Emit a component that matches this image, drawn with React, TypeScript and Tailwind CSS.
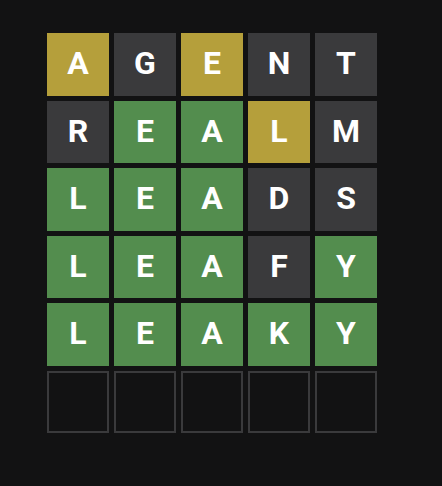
import React from "react";

type S = "y" | "g" | "x" | "e";
const rows: { l: string; s: S }[][] = [
  [
    { l: "A", s: "y" },
    { l: "G", s: "x" },
    { l: "E", s: "y" },
    { l: "N", s: "x" },
    { l: "T", s: "x" },
  ],
  [
    { l: "R", s: "x" },
    { l: "E", s: "g" },
    { l: "A", s: "g" },
    { l: "L", s: "y" },
    { l: "M", s: "x" },
  ],
  [
    { l: "L", s: "g" },
    { l: "E", s: "g" },
    { l: "A", s: "g" },
    { l: "D", s: "x" },
    { l: "S", s: "x" },
  ],
  [
    { l: "L", s: "g" },
    { l: "E", s: "g" },
    { l: "A", s: "g" },
    { l: "F", s: "x" },
    { l: "Y", s: "g" },
  ],
  [
    { l: "L", s: "g" },
    { l: "E", s: "g" },
    { l: "A", s: "g" },
    { l: "K", s: "g" },
    { l: "Y", s: "g" },
  ],
  [
    { l: "", s: "e" },
    { l: "", s: "e" },
    { l: "", s: "e" },
    { l: "", s: "e" },
    { l: "", s: "e" },
  ],
];

const cls: Record<S, string> = {
  y: "bg-[#b59f3b]",
  g: "bg-[#538d4e]",
  x: "bg-[#3a3a3c]",
  e: "border-2 border-[#3a3a3c]",
};

export default function App() {
  return (
    <div className="w-[442px] h-[486px] bg-[#121213] pl-[47px] pt-[33px]">
      <div className="grid grid-cols-5 grid-rows-6 gap-[5px] w-[330px] h-[400px]">
        {rows.flat().map((t, i) => (
          <div
            key={i}
            className={`${cls[t.s]} flex items-center justify-center pb-[2px] text-white text-[32px] font-bold uppercase leading-none`}
            style={{ fontFamily: "Roboto, 'Liberation Sans', sans-serif" }}
          >
            {t.l}
          </div>
        ))}
      </div>
    </div>
  );
}
